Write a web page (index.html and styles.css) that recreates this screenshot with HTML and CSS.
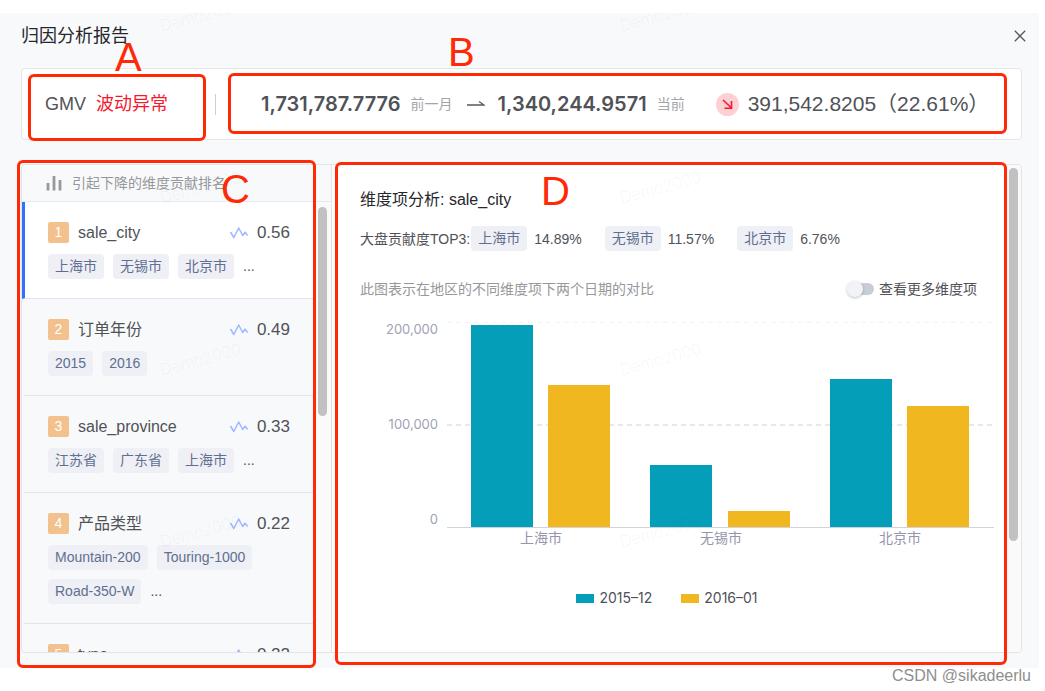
FILE: index.html
```html
<!DOCTYPE html>
<html lang="zh-CN">
<head>
    <meta charset="UTF-8">
    <meta name="viewport" content="width=device-width, initial-scale=1.0">
    <title>归因分析报告</title>
    <link rel="stylesheet" href="styles.css">
</head>
<body>
    <svg class="sprite" aria-hidden="true">
        <symbol id="icon-trend" viewBox="0 0 18 14">
            <path d="M0.800 6.500l3 5L8.700 2l4 7.500 2.300-3.300 2.300 2.800" fill="none" stroke="#9db8ff" stroke-width="1.500" stroke-linejoin="round" stroke-linecap="round"/>
        </symbol>
    </svg>

    <div class="dialog">
        <div class="dialog-header">
            <h1>归因分析报告</h1>
            <button class="close-button" type="button" aria-label="关闭">
                <svg width="12" height="12" viewBox="0 0 12 12"><path d="M0.800 0.800l10.400 10.400M11.200 0.800L0.800 11.200" stroke="#55585f" stroke-width="1.300" fill="none"/></svg>
            </button>
        </div>

        <!-- Summary -->
        <div class="summary">
            <span class="metric-name">GMV</span>
            <span class="metric-status">波动异常</span>
            <span class="divider"></span>
            <span class="amount">1,731,787.7776</span>
            <span class="period">前一月</span>
            <svg class="arrow" width="18" height="8" viewBox="0 0 18 8"><path d="M0 5h17l-5-3.500" fill="none" stroke="#55585f" stroke-width="1.300"/></svg>
            <span class="amount">1,340,244.9571</span>
            <span class="period">当前</span>
            <svg class="down-icon" width="23" height="23" viewBox="0 0 23 23"><circle cx="11.500" cy="11.500" r="11.500" fill="#fdd0d3"/><path d="M7 7l8.500 8M15.500 8v7.300H8.500" fill="none" stroke="#f5182f" stroke-width="1.600"/></svg>
            <span class="change">391,542.8205（22.61%）</span>
            <div class="mark mark-a"></div>
            <div class="mark mark-b"></div>
            <span class="letter letter-a">A</span>
            <span class="letter letter-b">B</span>
        </div>

        <div class="report">
            <div class="workspace">
                <!-- Dimension ranking -->
                <div class="sidebar">
                    <div class="sidebar-title">
                        <svg width="16" height="16" viewBox="0 0 16 16"><path d="M2 8v7.500M8 1v14.500M14 5v10.500" stroke="#999" stroke-width="2.800" fill="none"/></svg>
                        <span>引起下降的维度贡献排名</span>
                    </div>
                    <div class="sidebar-body">
                        <ul class="ranking">
                            <li class="active">
                                <div class="rank-row"><span class="badge">1</span><span class="name">sale_city</span><svg class="trend"><use href="#icon-trend"/></svg><span class="score">0.56</span></div>
                                <div class="chips"><span class="chip">上海市</span><span class="chip">无锡市</span><span class="chip">北京市</span><span>...</span></div>
                            </li>
                            <li>
                                <div class="rank-row"><span class="badge">2</span><span class="name">订单年份</span><svg class="trend"><use href="#icon-trend"/></svg><span class="score">0.49</span></div>
                                <div class="chips"><span class="chip">2015</span><span class="chip">2016</span></div>
                            </li>
                            <li>
                                <div class="rank-row"><span class="badge">3</span><span class="name">sale_province</span><svg class="trend"><use href="#icon-trend"/></svg><span class="score">0.33</span></div>
                                <div class="chips"><span class="chip">江苏省</span><span class="chip">广东省</span><span class="chip">上海市</span><span>...</span></div>
                            </li>
                            <li>
                                <div class="rank-row"><span class="badge">4</span><span class="name">产品类型</span><svg class="trend"><use href="#icon-trend"/></svg><span class="score">0.22</span></div>
                                <div class="chips"><span class="chip">Mountain-200</span><span class="chip">Touring-1000</span><span class="chip">Road-350-W</span><span>...</span></div>
                            </li>
                            <li>
                                <div class="rank-row"><span class="badge">5</span><span class="name">type</span><svg class="trend"><use href="#icon-trend"/></svg><span class="score">0.22</span></div>
                            </li>
                        </ul>
                        <div class="scroll-track sidebar-track"><div class="scroll-thumb"></div></div>
                    </div>
                </div>

                <!-- Dimension detail -->
                <div class="detail">
                    <div class="detail-content">
                        <h2>维度项分析: sale_city</h2>
                        <div class="top-list">
                            <span>大盘贡献度TOP3:</span>
                            <span class="chip">上海市</span><span class="percent">14.89%</span>
                            <span class="chip">无锡市</span><span class="percent">11.57%</span>
                            <span class="chip">北京市</span><span class="percent">6.76%</span>
                        </div>
                        <div class="chart-header">
                            <p>此图表示在地区的不同维度项下两个日期的对比</p>
                            <label class="switch"><input type="checkbox">查看更多维度项</label>
                        </div>
                        <svg class="chart" width="634" height="248" viewBox="0 0 634 248" role="img" aria-label="sale_city">
                            <path d="M87 10.500H634" stroke="#f3f3f4" stroke-dasharray="5 4"/>
                            <path d="M87 113H634" stroke="#e8e8ea" stroke-width="2" stroke-dasharray="5 4"/>
                            <g fill="#049eb8">
                                <rect x="111" y="13" width="62" height="202"/>
                                <rect x="290" y="153" width="62" height="62"/>
                                <rect x="470" y="67" width="62" height="148"/>
                            </g>
                            <g fill="#f0b721">
                                <rect x="188" y="73" width="62" height="142"/>
                                <rect x="368" y="199" width="62" height="16"/>
                                <rect x="547" y="94" width="62" height="121"/>
                            </g>
                            <path d="M87 215.500H634" stroke="#d2d3dd"/>
                            <g class="axis-value">
                                <text x="78" y="22">200,000</text>
                                <text x="78" y="117">100,000</text>
                                <text x="78" y="212">0</text>
                            </g>
                            <g class="axis-name">
                                <text x="181" y="231">上海市</text>
                                <text x="361" y="231">无锡市</text>
                                <text x="540" y="231">北京市</text>
                            </g>
                        </svg>
                        <div class="legend">
                            <span class="legend-item"><i class="swatch teal"></i>2015–12</span>
                            <span class="legend-item"><i class="swatch yellow"></i>2016–01</span>
                        </div>
                    </div>
                    <div class="scroll-track detail-track"><div class="scroll-thumb"></div></div>
                </div>
            </div>
            <div class="mark mark-c"></div>
            <div class="mark mark-d"></div>
            <span class="letter letter-c">C</span>
            <span class="letter letter-d">D</span>
        </div>

        <div class="watermarks" aria-hidden="true">
            <span class="clipped">Demo2000</span><span class="clipped">Demo2000</span>
            <span>Demo2000</span><span>Demo2000</span>
            <span>Demo2000</span><span>Demo2000</span>
            <span>Demo2000</span><span>Demo2000</span>
        </div>
    </div>
    <div class="credit">CSDN @sikadeerlu</div>
</body>
</html>
```

FILE: styles.css
```css
* {
    box-sizing: border-box;
}

body {
    font-family: "Liberation Sans", "Noto Sans CJK SC", sans-serif;
    font-size: 14px;
    line-height: 20px;
    color: #505257;
    background: #fff;
    margin: 0;
    height: 100vh;
    display: flex;
    flex-direction: column;
    overflow: hidden;
}

h1, h2, p, ul {
    margin: 0;
    padding: 0;
    font-weight: normal;
}

.sprite {
    display: none;
}

.dialog {
    position: relative;
    flex: 1;
    min-height: 0;
    margin: 13px 6px 0 0;
    padding: 0 17px 15px 21px;
    background: #f8f9fb;
    display: flex;
    flex-direction: column;
}

.dialog-header {
    height: 55px;
    padding-bottom: 9px;
    display: flex;
    justify-content: space-between;
    align-items: center;
}

.dialog-header h1 {
    font-size: 18px;
    line-height: 24px;
    color: #25272b;
}

.close-button {
    width: 20px;
    height: 20px;
    padding: 0;
    margin-right: -8px;
    border: none;
    background: none;
    display: flex;
    align-items: center;
    justify-content: center;
    cursor: pointer;
}

/* Summary card */
.summary {
    position: relative;
    height: 72px;
    padding-left: 23px;
    background: #fff;
    border: 1px solid #e5e7ec;
    border-radius: 4px;
    display: flex;
    align-items: center;
    white-space: nowrap;
}

.metric-name,
.metric-status {
    font-size: 18px;
    line-height: 24px;
}

.metric-status {
    margin-left: 10px;
    color: #f5182f;
}

.divider {
    width: 1px;
    height: 21px;
    margin: 0 45px 0 47px;
    background: #cfcfd2;
}

.amount {
    font-family: Inter, "Liberation Sans", sans-serif;
    font-size: 20px;
    line-height: 24px;
    font-weight: 600;
}

.period {
    margin-left: 10px;
    color: #a3a5a9;
}

.arrow {
    margin: 0 13px 0 14px;
}

.down-icon {
    margin: 0 9px 0 31px;
}

.change {
    font-size: 21px;
    line-height: 24px;
}

/* Panels */
.report {
    position: relative;
    flex: 1;
    min-height: 0;
    margin-top: 24px;
    display: flex;
}

.workspace {
    flex: 1;
    min-width: 0;
    display: flex;
    border: 1px solid #e2e4ea;
    border-radius: 4px;
    overflow: hidden;
}

.sidebar {
    width: 310px;
    flex-shrink: 0;
    border-right: 1px solid #e2e2e8;
    display: flex;
    flex-direction: column;
}

.sidebar-title {
    height: 37px;
    flex-shrink: 0;
    padding-left: 24px;
    border-bottom: 1px solid #e8eaef;
    color: #96989c;
    display: flex;
    align-items: center;
    gap: 10px;
}

.sidebar-body {
    flex: 1;
    min-height: 0;
    display: flex;
}

.ranking {
    flex: 1;
    list-style: none;
    overflow: hidden;
}

.ranking li {
    padding: 20px 23px 19px;
    border-left: 3px solid transparent;
    border-bottom: 1px solid #e2e4ec;
    background-clip: padding-box;
}

.ranking li.active {
    background: #fff;
    border-left-color: #3370ff;
}

.rank-row {
    height: 21px;
    display: flex;
    align-items: center;
    font-size: 16px;
}

.badge {
    width: 21px;
    height: 21px;
    border-radius: 2px;
    background: #f2c18d;
    color: #fff;
    font-size: 14px;
    line-height: 21px;
    text-align: center;
}

.name {
    flex: 1;
    margin-left: 9px;
}

.trend {
    width: 18px;
    height: 14px;
    margin-right: 9px;
}

.score {
    font-size: 17px;
}

.chips {
    display: flex;
    flex-wrap: wrap;
    gap: 9px;
    margin-top: 11px;
    line-height: 25px;
}

.chip {
    padding: 0 7px;
    height: 25px;
    line-height: 25px;
    border-radius: 4px;
    background: #eff0f5;
    color: #5f6f91;
}

.scroll-track {
    flex-shrink: 0;
    background: #fafafa;
}

.scroll-thumb {
    width: 9px;
    border-radius: 5px;
    background: #c1c1c1;
}

.sidebar-track {
    width: 18px;
    padding: 5px 0 0 5px;
}

.sidebar-track .scroll-thumb {
    height: 47%;
}

.detail {
    flex: 1;
    min-width: 0;
    background: #fff;
    display: flex;
}

.detail-content {
    flex: 1;
    min-width: 0;
    padding: 23px 13px 0 28px;
}

.detail-content h2 {
    font-size: 16px;
    line-height: 24px;
    color: #25272b;
}

.top-list {
    display: flex;
    align-items: center;
    margin-top: 14px;
}

.top-list .chip {
    margin: 0 7px 0 23px;
}

.top-list .chip:nth-child(2) {
    margin-left: 1px;
}

.chart-header {
    display: flex;
    justify-content: space-between;
    margin: 28px 17px 13px 0;
    color: #96989c;
}

.switch {
    display: flex;
    align-items: center;
    gap: 5px;
    color: #505257;
}

.switch input {
    appearance: none;
    position: relative;
    width: 21px;
    height: 12px;
    margin: 0;
    border-radius: 6px;
    background: #c9cdd6;
}

.switch input::before {
    content: "";
    position: absolute;
    left: -6px;
    top: -2px;
    width: 16px;
    height: 16px;
    border-radius: 50%;
    background: #f2f3f8;
    box-shadow: 0 1px 3px rgba(0, 0, 0, 0.25);
}

.chart {
    display: block;
}

.axis-value,
.legend {
    font-family: Inter, "Liberation Sans", sans-serif;
}

.axis-value {
    font-size: 13px;
    fill: #a0a2b5;
    text-anchor: end;
}

.axis-name {
    fill: #9496ab;
    text-anchor: middle;
}

.legend {
    display: flex;
    justify-content: center;
    gap: 29px;
    margin: 28px 20px 0 0;
}

.legend-item {
    display: flex;
    align-items: center;
    gap: 5px;
}

.swatch {
    width: 18px;
    height: 9px;
}

.teal {
    background: #049eb8;
}

.yellow {
    background: #f0b721;
}

.detail-track {
    width: 14px;
    padding: 3px 0 0 2px;
}

.detail-track .scroll-thumb {
    height: 77%;
}

/* Red region marks over the panels */
.mark {
    position: absolute;
    border: 3px solid #ff2a05;
    border-radius: 6px;
    pointer-events: none;
}

.mark-a {
    left: 6px;
    top: 5px;
    bottom: -2px;
    width: 178px;
}

.mark-b {
    left: 206px;
    right: 14px;
    top: 4px;
    bottom: 5px;
}

.mark-c {
    left: -4px;
    top: -4px;
    bottom: -15px;
    width: 299px;
}

.mark-d {
    left: 314px;
    right: 15px;
    top: -2px;
    bottom: -12px;
}

.letter {
    position: absolute;
    font-size: 40px;
    line-height: 40px;
    color: #ff2a05;
}

.letter-a {
    left: 93px;
    top: -32px;
}

.letter-b {
    left: 426px;
    top: -37px;
}

.letter-c {
    left: 200px;
    top: 5px;
}

.letter-d {
    left: 520px;
    top: 7px;
}

.watermarks {
    position: absolute;
    inset: 0;
    overflow: hidden;
    pointer-events: none;
    display: grid;
    grid-template-columns: 400px 520px;
    grid-template-rows: 88px;
    grid-auto-rows: 172px;
    place-items: center;
    font-family: Inter, sans-serif;
    font-size: 16px;
    font-weight: 200;
    color: rgba(0, 0, 0, 0.07);
}

.watermarks span {
    transform: rotate(-15deg);
}

/* The first row runs off the top of the dialog */
.watermarks .clipped {
    align-self: start;
    margin-top: -8px;
}

.credit {
    height: 23px;
    padding: 0 14px 7px 0;
    font-size: 16px;
    line-height: 16px;
    text-align: right;
    color: #8e8e8e;
}
```
